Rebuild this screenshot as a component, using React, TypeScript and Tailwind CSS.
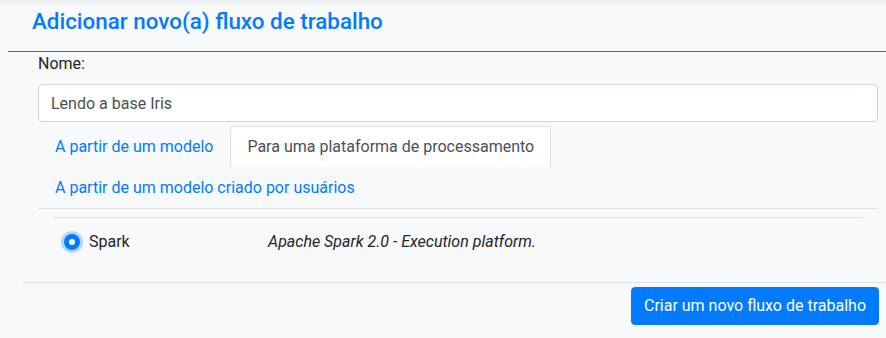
import React from "react";

export default function App() {
  return (
    <div className="min-h-[338px] w-full bg-[#f8f9fa] font-['Roboto','Liberation_Sans',sans-serif] text-[16px] leading-6 text-[#212529] shadow-[inset_0_5px_5px_-3px_rgba(0,0,0,0.07)]">
      <div className="ml-2 border-b border-[#1a73e8] pl-6 pt-[9px] pb-[18px]">
        <h5 className="text-[22.4px] font-medium leading-6 text-[#007bff]">
          Adicionar novo(a) fluxo de trabalho
        </h5>
      </div>
      <div className="ml-[23px]">
        <div className="pl-[15px] pr-2">
          <label className="block">Nome:</label>
          <input
            className="mt-2 block h-[38px] w-full rounded border border-[#ced4da] bg-white px-3 text-[16px] text-[#495057] outline-none"
            defaultValue="Lendo a base Iris"
          />
          <div className="mt-1 flex flex-wrap border-b border-[#dee2e6]">
            <a className="border border-b-0 border-transparent px-4 py-2 text-[#007bff]">
              A partir de um modelo
            </a>
            <a className="rounded-t border border-b-0 border-[#dee2e6] bg-white px-4 py-2 text-[#495057]">
              Para uma plataforma de processamento
            </a>
            <div className="h-0 basis-full" />
            <a className="border border-b-0 border-transparent px-4 py-2 text-[#007bff]">
              A partir de um modelo criado por usuários
            </a>
          </div>
          <div className="mx-[15px] mt-2 border-t border-[#dee2e6]">
            <div className="flex items-center py-3">
              <div className="flex w-[203px] items-center pl-[11px]">
                <span className="flex h-4 w-4 items-center justify-center rounded-full bg-[#007bff] shadow-[0_0_0_3px_rgba(0,123,255,0.28)]">
                  <span className="h-[6px] w-[6px] rounded-full bg-white" />
                </span>
                <span className="ml-[9px]">Spark</span>
              </div>
              <div className="pl-3 italic">Apache Spark 2.0 - Execution platform.</div>
            </div>
          </div>
        </div>
        <div className="mt-4 flex justify-end border-t border-[#dee2e6] pr-[7px] pt-1">
          <button className="rounded border border-[#007bff] bg-[#007bff] px-3 py-[6px] text-[16px] leading-6 text-white">
            Criar um novo fluxo de trabalho
          </button>
        </div>
      </div>
    </div>
  );
}
